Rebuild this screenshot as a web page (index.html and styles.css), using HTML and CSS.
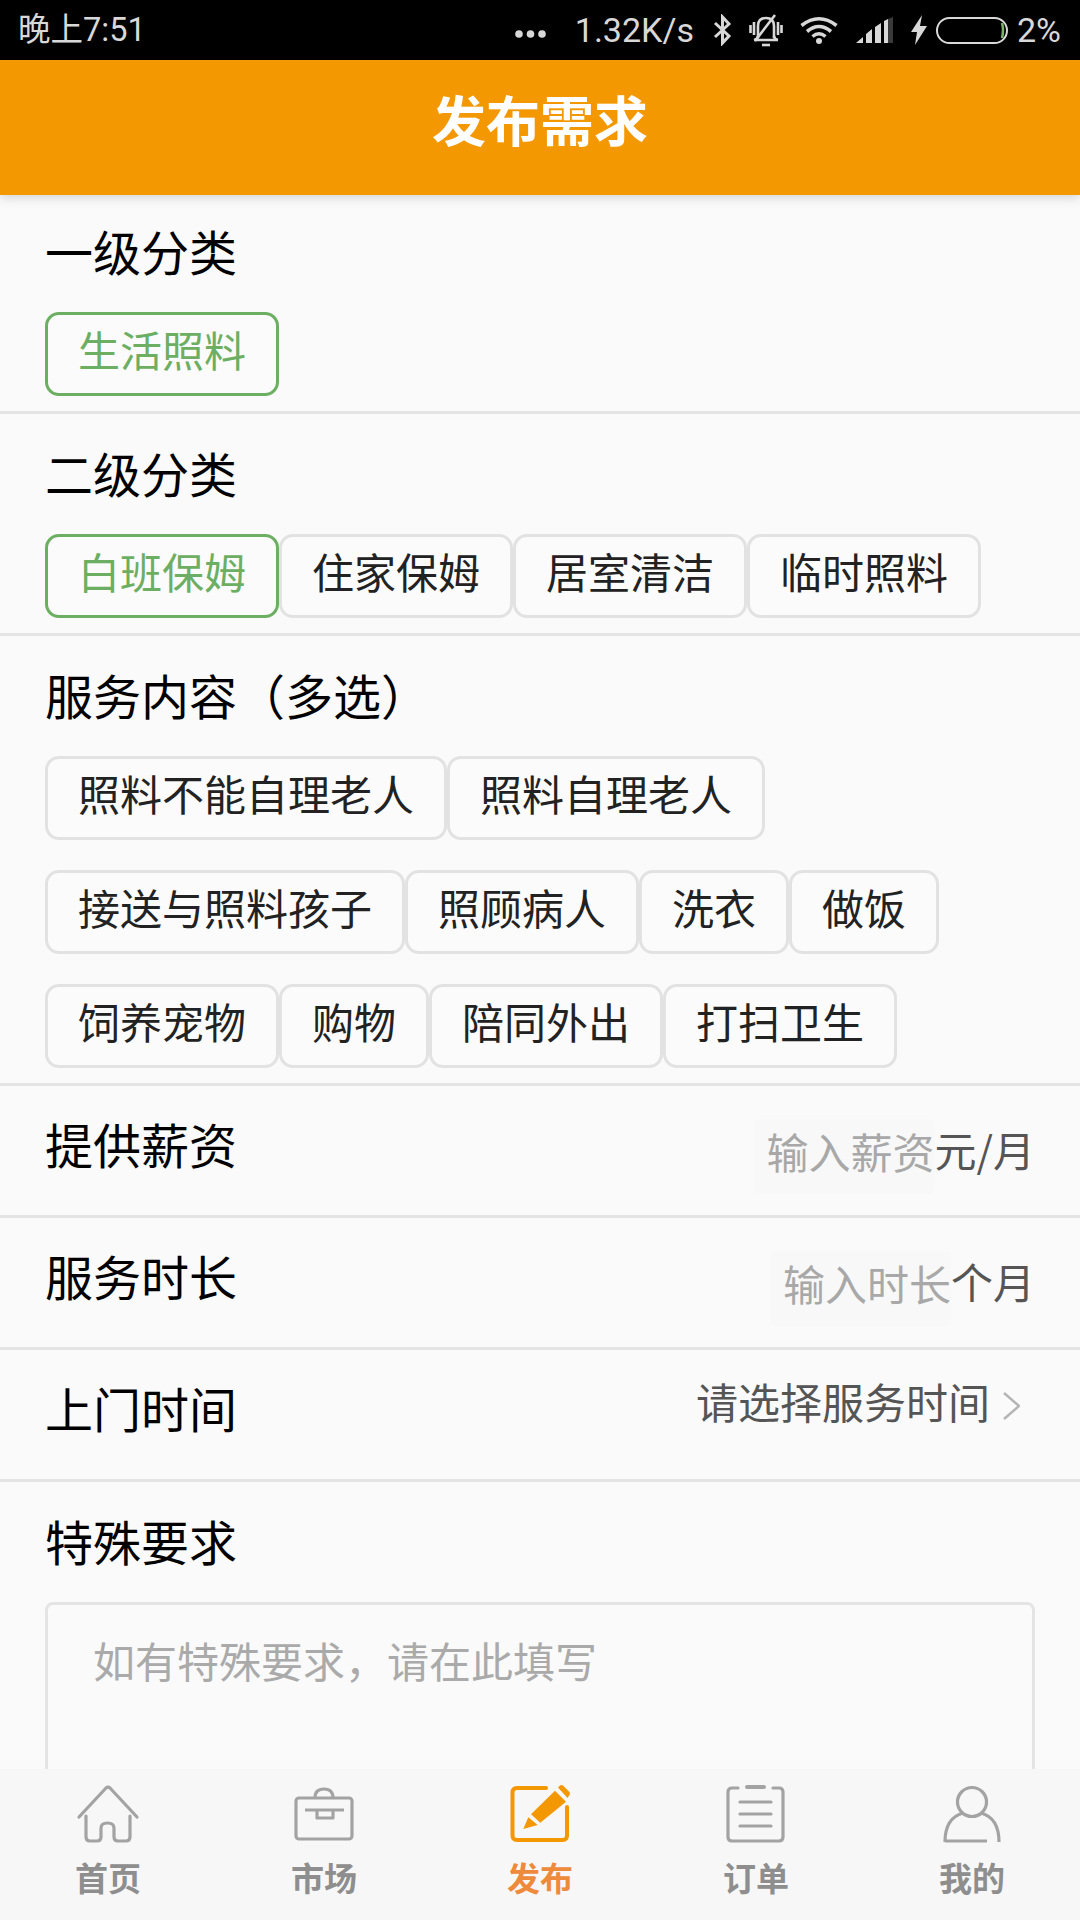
FILE: index.html
```html
<!DOCTYPE html>
<html lang="zh-Hans">
<head>
  <meta charset="UTF-8">
  <title>发布需求</title>
  <link rel="stylesheet" href="styles.css">
</head>
<body>
  <div class="status-bar">
    <span class="status-time">晚上7:51</span>
    <div class="status-right">
      <svg class="st-dots" width="31" height="8" viewBox="0 0 31 8"><circle cx="4" cy="4" r="3.8"/><circle cx="15.5" cy="4" r="3.8"/><circle cx="27" cy="4" r="3.8"/></svg>
      <span class="st-speed">1.32K/s</span>
      <svg class="st-bt" width="19" height="32" viewBox="0 0 19 32"><path d="M2 9 L16 22 L9.5 29 V3 L16 10 L2 23" fill="none" stroke="#d8d8d8" stroke-width="3"/></svg>
      <svg class="st-bell" width="34" height="34" viewBox="0 0 34 34" fill="none" stroke="#d8d8d8" stroke-width="2.600"><path d="M9 25 V13 Q9 5 17 5 Q25 5 25 13 V25"/><path d="M5 27 Q9 26 9 23 M25 23 Q25 26 29 27 M5 27 H29"/><path d="M13 32 H21"/><path d="M1.500 12 V20 M5 9 V22 M29 9 V22 M32.500 12 V20"/><path d="M6 28 L26 2"/></svg>
      <svg class="st-wifi" width="38" height="28" viewBox="0 0 38 28" fill="none" stroke="#d8d8d8" stroke-width="3.600"><path d="M1.500 9.500 Q19 -4 36.500 9.500"/><path d="M7 15.500 Q19 5.500 31 15.500"/><path d="M12.500 20.500 Q19 15 25.500 20.500"/><circle cx="19" cy="25" r="3" fill="#d8d8d8" stroke="none"/></svg>
      <svg class="st-signal" width="37" height="26" viewBox="0 0 37 26"><path d="M0 26 L7 20 V26 Z M10 26 V17 L16 12 V26 Z M19 26 V10 L25 6 V26 Z" fill="#d8d8d8"/><path d="M28 26 V4 L32 2 V26 Z" fill="#d8d8d8"/><path d="M32 26 V2 L37 0 V26 Z" fill="#3a3a3a"/></svg>
      <svg class="st-bolt" width="16" height="30" viewBox="0 0 16 30"><path d="M11 0 L0 17 H6 L4 30 L16 11 H9 Z" fill="#d8d8d8"/></svg>
      <svg class="st-batt" width="72" height="27" viewBox="0 0 72 27"><rect x="1" y="1" width="70" height="25" rx="12.500" fill="none" stroke="#d8d8d8" stroke-width="2"/><path d="M66 6 Q68 13 66 21" fill="none" stroke="#7bb56a" stroke-width="2.500"/></svg>
      <span class="st-pct">2%</span>
    </div>
  </div>

  <header class="title-bar">发布需求</header>

  <main class="form">
    <section class="block first">
      <h2>一级分类</h2>
      <div class="chips">
        <span class="chip on">生活照料</span>
      </div>
    </section>

    <section class="block">
      <h2>二级分类</h2>
      <div class="chips">
        <span class="chip on">白班保姆</span>
        <span class="chip">住家保姆</span>
        <span class="chip">居室清洁</span>
        <span class="chip">临时照料</span>
      </div>
    </section>

    <section class="block">
      <h2>服务内容（多选）</h2>
      <div class="chips">
        <span class="chip">照料不能自理老人</span>
        <span class="chip">照料自理老人</span>
      </div>
      <div class="chips">
        <span class="chip">接送与照料孩子</span>
        <span class="chip">照顾病人</span>
        <span class="chip">洗衣</span>
        <span class="chip">做饭</span>
      </div>
      <div class="chips">
        <span class="chip">饲养宠物</span>
        <span class="chip">购物</span>
        <span class="chip">陪同外出</span>
        <span class="chip">打扫卫生</span>
      </div>
    </section>

    <div class="row">
      <span class="row-label">提供薪资</span>
      <div class="row-value">
        <span class="fake-input">输入薪资</span><span class="unit">元/月</span>
      </div>
    </div>
    <div class="row">
      <span class="row-label">服务时长</span>
      <div class="row-value">
        <span class="fake-input">输入时长</span><span class="unit">个月</span>
      </div>
    </div>
    <div class="row">
      <span class="row-label">上门时间</span>
      <div class="row-value pick">
        <span class="pick-text">请选择服务时间</span>
        <svg class="arrow" width="17" height="28" viewBox="0 0 17 28"><path d="M1 1 L16 14 L1 27" fill="none" stroke="#b4b4b4" stroke-width="2.400"/></svg>
      </div>
    </div>

    <section class="block last">
      <h2>特殊要求</h2>
      <div class="textarea">如有特殊要求，请在此填写</div>
    </section>
  </main>

  <nav class="tabs">
    <a class="tab">
      <svg width="60" height="60" viewBox="0 0 60 60" fill="none" stroke="#a3a3a3" stroke-width="3.200" stroke-linecap="round" stroke-linejoin="round"><path d="M1 32 L28 3 Q30 1 32 3 L59 32"/><path d="M8 31 V52 Q8 56 12 56 H19 Q23 56 23 52 V43 Q23 38 29.500 38 Q36 38 36 43 V52 Q36 56 40 56 H48 Q52 56 52 52 V31"/></svg>
      <span>首页</span>
    </a>
    <a class="tab">
      <svg width="60" height="60" viewBox="0 0 60 60" fill="none" stroke="#a3a3a3" stroke-width="3.200" stroke-linejoin="round"><rect x="2" y="13" width="56" height="41" rx="3"/><path d="M21 13 Q21 4 30 4 Q39 4 39 13"/><path d="M11 25 H50"/><path d="M23 25 V33 H39 V25"/></svg>
      <span>市场</span>
    </a>
    <a class="tab active">
      <svg width="60" height="60" viewBox="0 0 60 60" fill="none" stroke="#f39800" stroke-width="4" stroke-linecap="round"><path d="M36 3 H7 Q2.500 3 2.500 7.500 V50.500 Q2.500 55 7 55 H52.500 Q57 55 57 50.500 V22"/><path d="M13.300 44 L18.300 32.300 L27.700 40 Z" fill="#f39800" stroke="none"/><path d="M21 29.300 L45 5.700 L56 16.700 L30.300 37.700 Z" fill="#f39800" stroke="none"/><path d="M48 2.500 L50 0.500 Q51.500 -0.500 53 0.500 L59.500 7 Q60.500 8.500 59.500 10 L57.500 13 Z" fill="#f39800" stroke="none"/></svg>
      <span>发布</span>
    </a>
    <a class="tab">
      <svg width="60" height="60" viewBox="0 0 60 60" fill="none" stroke="#a3a3a3" stroke-width="3.200" stroke-linecap="round"><path d="M12 3 H6 Q2 3 2 7 V52 Q2 56 6 56 H53 Q57 56 57 52 V7 Q57 3 53 3 H47"/><path d="M21 2 H38" stroke-width="4"/><path d="M14 17 H45 M14 29 H45 M14 41 H45"/></svg>
      <span>订单</span>
    </a>
    <a class="tab">
      <svg width="60" height="60" viewBox="0 0 60 60" fill="none" stroke="#a3a3a3" stroke-width="3.200"><circle cx="30" cy="17" r="14.500"/><path d="M3 57 Q3 33 21 28"/><path d="M39 28 Q57 33 57 57"/><path d="M3 56 H45"/></svg>
      <span>我的</span>
    </a>
  </nav>
</body>
</html>
```

FILE: styles.css
```css
* { box-sizing: border-box; }
html, body { margin: 0; padding: 0; }
body {
  width: 1080px;
  height: 1920px;
  display: flex;
  flex-direction: column;
  overflow: hidden;
  background-color: #fafafa;
  font-family: "Noto Sans CJK SC", "Liberation Sans", sans-serif;
}

.status-bar {
  height: 60px;
  flex: none;
  background-color: #000;
  color: #d8d8d8;
  display: flex;
  justify-content: space-between;
  align-items: center;
  padding: 0 19px 0 18px;
  font-family: "Roboto", "Noto Sans CJK SC", sans-serif;
  font-size: 34px;
}
.status-time { font-size: 32.500px; line-height: 60px; }
.status-right { display: flex; align-items: center; }
.st-dots { fill: #d8d8d8; margin: 8px 29px 0 0; }
.st-bt { margin-left: 19px; }
.st-bell { margin-left: 17px; }
.st-wifi { margin-left: 17px; }
.st-signal { margin-left: 18px; }
.st-bolt { margin-left: 18px; }
.st-batt { margin-left: 9px; }
.st-pct { margin-left: 9px; }

.title-bar {
  height: 135px;
  flex: none;
  background-color: #f39800;
  color: #fff;
  font-size: 54px;
  font-weight: 700;
  text-align: center;
  line-height: 118px;
  box-shadow: 0 3px 10px rgba(0,0,0,0.15);
  position: relative;
}

.form { flex: 1; overflow: hidden; }

.block {
  padding: 24px 45px 15px;
  border-bottom: 3px solid #e4e4e4;
}
.block.first { padding-top: 21px; }
.block.last { border-bottom: 0; }
.block h2 {
  margin: 0 0 28px;
  font-size: 48px;
  font-weight: 400;
  line-height: 68px;
  color: #000;
}

.chips { display: flex; }
.chips + .chips { margin-top: 30px; }
.chip {
  height: 84px;
  padding: 0 30px;
  border: 3px solid #e2e2e2;
  border-radius: 14px;
  font-size: 42px;
  line-height: 68px;
  color: #222;
  background-color: #fbfbfb;
}
.chip.on { border-color: #6cae62; color: #6cae62; }

.row {
  height: 132px;
  display: flex;
  justify-content: space-between;
  align-items: center;
  padding: 0 45px;
  border-bottom: 3px solid #e4e4e4;
}
.row-label { font-size: 48px; color: #000; margin-top: -15px; }
.row-value { display: flex; align-items: center; font-size: 42px; margin-top: 12px; }
.row-value.pick { margin-top: -28px; }
.fake-input {
  display: block;
  height: 75px;
  line-height: 63px;
  padding-left: 13px;
  color: #a8a8a8;
  background-color: #f8f8f8;
  border-radius: 6px;
}
.unit { color: #555; line-height: 68px; margin-bottom: 16px; }
.pick-text { color: #555; line-height: 68px; }
.arrow { margin: 10px 15px 0 13px; }

.textarea {
  height: 300px;
  border: 3px solid #e4e4e4;
  border-radius: 8px;
  padding: 20px 45px;
  font-size: 42px;
  line-height: 70px;
  color: #aaa;
  background-color: #fafafa;
}

.tabs {
  height: 151px;
  flex: none;
  display: flex;
  background-color: #f7f7f7;
  position: relative;
}
.tab {
  flex: 1;
  display: flex;
  flex-direction: column;
  align-items: center;
  padding-top: 16px;
  color: #8e8e8e;
  font-size: 33px;
  font-weight: 700;
  line-height: 46px;
}
.tab svg { display: block; margin-bottom: 9px; overflow: visible; }
.tab.active { color: #ee8a3c; }
```
